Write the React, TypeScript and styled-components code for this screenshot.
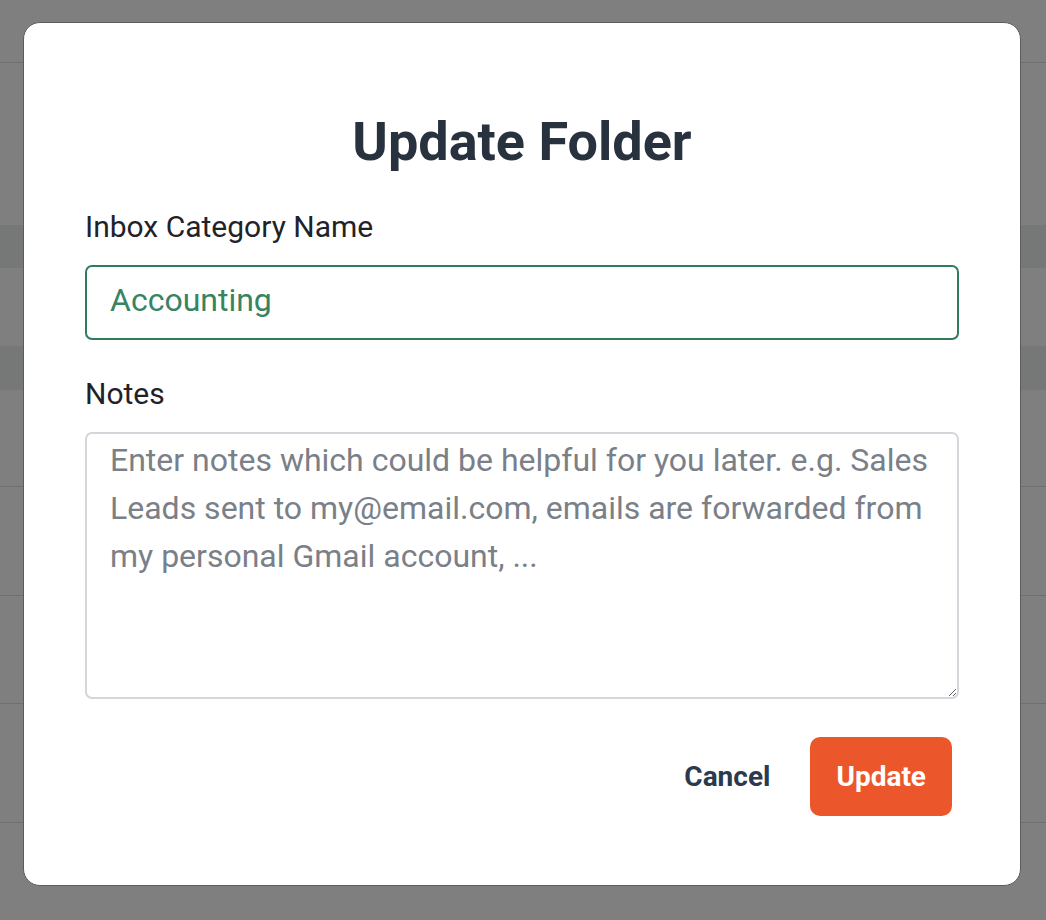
import React from "react";
import styled, { createGlobalStyle } from "styled-components";

const Global = createGlobalStyle`
  html, body { margin: 0; padding: 0; }
  body {
    font-family: Roboto, "Liberation Sans", Arial, sans-serif;
    background: #ffffff;
    overflow: hidden;
  }
  * { box-sizing: border-box; }
`;

const Page = styled.div`
  width: 1046px;
  height: 920px;
  display: flex;
  flex-direction: column;
`;

const BgRow = styled.div<{ $h: number; $tone: "light" | "dark"; $line?: boolean }>`
  height: ${(p) => p.$h}px;
  flex: none;
  background: ${(p) => (p.$tone === "dark" ? "#ecf1ef" : "#ffffff")};
  border-bottom: ${(p) => (p.$line ? "1px solid #dedede" : "none")};
`;

const Overlay = styled.div`
  position: fixed;
  inset: 0;
  background: rgba(0, 0, 0, 0.5);
  display: flex;
  align-items: flex-start;
  padding: 22px 25px 35px 23px;
`;

const Modal = styled.div`
  width: 998px;
  background: #ffffff;
  border: 1px solid #5c5c5c;
  border-radius: 17px;
  padding: 89px 61px 69px 61px;
  display: flex;
  flex-direction: column;
`;

const Title = styled.h1`
  margin: 0 0 35px;
  font-size: 54px;
  line-height: 60px;
  font-weight: 700;
  color: #28323e;
  text-align: center;
`;

const Label = styled.label`
  display: block;
  font-size: 30px;
  line-height: 40px;
  color: #1f2329;
  margin: 0 0 18px;
`;

const TextInput = styled.input`
  display: block;
  width: 100%;
  height: 75px;
  border: 2px solid #2f7d5a;
  border-radius: 7px;
  padding: 0 23px 6px;
  font-family: inherit;
  font-size: 32px;
  color: #378462;
  outline: none;
  margin: 0 0 34px;
  background: #fff;
`;

const NotesArea = styled.textarea`
  display: block;
  width: 100%;
  height: 267px;
  border: 2px solid #d3d6db;
  border-radius: 7px;
  padding: 2px 23px;
  font-family: inherit;
  font-size: 32px;
  line-height: 48px;
  color: #1f2329;
  resize: vertical;
  outline: none;
  background: #fff;
  &::placeholder {
    color: #7a7f88;
    opacity: 1;
  }
`;

const Footer = styled.div`
  display: flex;
  justify-content: flex-end;
  align-items: center;
  gap: 14px;
  margin-top: 38px;
  padding-right: 7px;
`;

const Button = styled.button<{ $primary?: boolean }>`
  height: 79px;
  padding: 0 26px;
  border: none;
  border-radius: 10px;
  font-family: inherit;
  font-size: 28px;
  font-weight: 700;
  cursor: pointer;
  background: ${(p) => (p.$primary ? "#eb572b" : "transparent")};
  color: ${(p) => (p.$primary ? "#ffffff" : "#2b3a4c")};
`;

const rows: { h: number; tone: "light" | "dark"; line?: boolean }[] = [
  { h: 63, tone: "light", line: true },
  { h: 162, tone: "light" },
  { h: 43, tone: "dark" },
  { h: 78, tone: "light" },
  { h: 44, tone: "dark" },
  { h: 97, tone: "light", line: true },
  { h: 109, tone: "light", line: true },
  { h: 108, tone: "light", line: true },
  { h: 119, tone: "light", line: true },
  { h: 93, tone: "light" },
];

export default function App() {
  return (
    <>
      <Global />
      <Page>
        {rows.map((r, i) => (
          <BgRow key={i} $h={r.h} $tone={r.tone} $line={r.line} />
        ))}
      </Page>
      <Overlay>
        <Modal role="dialog" aria-labelledby="title">
          <Title id="title">Update Folder</Title>
          <Label htmlFor="name">Inbox Category Name</Label>
          <TextInput id="name" defaultValue="Accounting" />
          <Label htmlFor="notes">Notes</Label>
          <NotesArea
            id="notes"
            placeholder="Enter notes which could be helpful for you later. e.g. Sales Leads sent to my@email.com, emails are forwarded from my personal Gmail account, ..."
          />
          <Footer>
            <Button type="button">Cancel</Button>
            <Button type="button" $primary>
              Update
            </Button>
          </Footer>
        </Modal>
      </Overlay>
    </>
  );
}
